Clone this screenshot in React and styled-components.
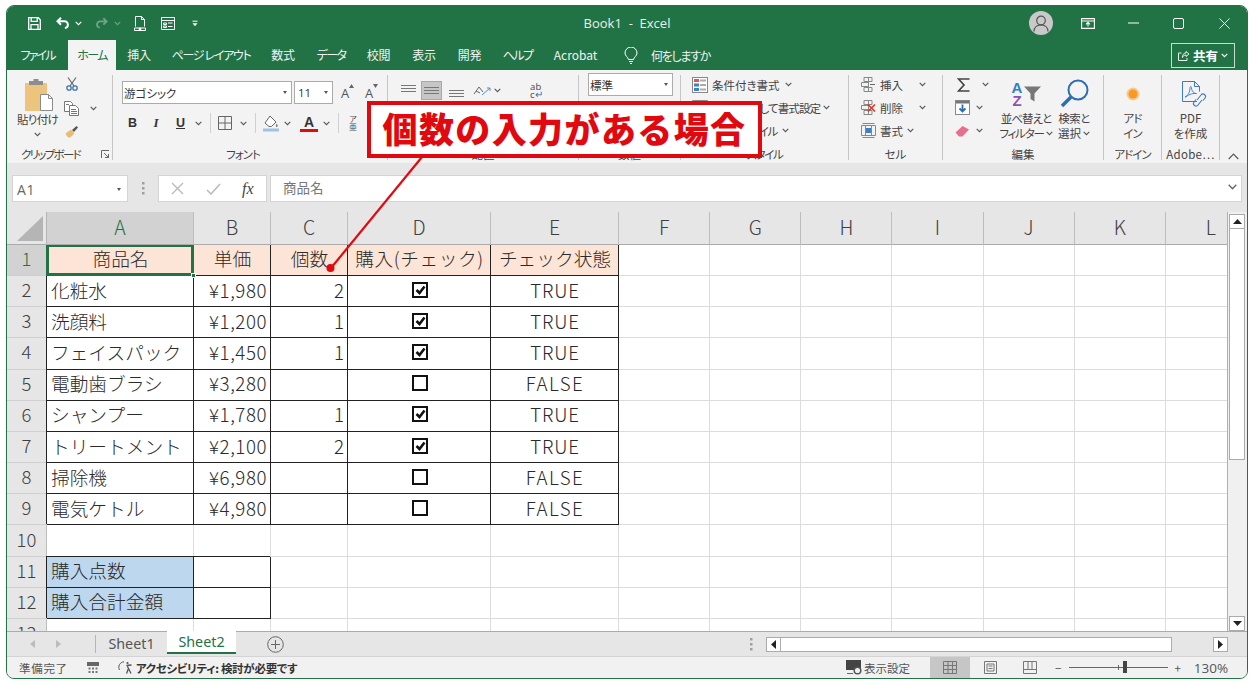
import React from 'react';
import styled, { createGlobalStyle } from 'styled-components';

const JP = `"Noto Sans CJK JP", "Noto Sans", sans-serif`;
const LATIN = `"Open Sans", "Noto Sans CJK JP", sans-serif`;
const GREEN = '#217346';

const Global = createGlobalStyle`
  html, body { margin: 0; padding: 0; background: #fff; }
  body { font-family: ${JP}; width: 1255px; height: 686px; overflow: hidden; }
  * { box-sizing: border-box; }
`;

const Page = styled.div`
  position: relative;
  width: 1255px;
  height: 686px;
  padding: 5px 0 0 6px;
`;
const Win = styled.div`
  width: 1242px;
  height: 674px;
  border: 1px solid ${GREEN};
  border-radius: 8px;
  overflow: hidden;
  display: flex;
  flex-direction: column;
  background: #e6e6e6;
  isolation: isolate;
`;
const Glyph = styled.svg`
  display: block;
  flex-shrink: 0;
  margin-left: ${p => p.$ml || 0}px;
  margin-top: ${p => p.$mt || 0}px;
`;

/* title bar */
const TitleBar = styled.div`
  height: 34px;
  background: ${GREEN};
  display: grid;
  grid-template-columns: 1fr auto 1fr;
  align-items: center;
`;
const Qat = styled.div`
  display: flex;
  align-items: center;
  padding-left: 21px;
`;
const TitleText = styled.div`
  font: 400 13px ${LATIN};
  color: #e9f1ec;
  white-space: pre;
`;
const WinControls = styled.div`
  display: flex;
  justify-content: flex-end;
  align-items: center;
  height: 100%;
`;
const Avatar = styled.div`
  width: 24px;
  height: 24px;
  border-radius: 50%;
  background: #c9c9c9;
  display: flex;
  align-items: center;
  justify-content: center;
  margin-right: 12px;
`;
const WinBtn = styled.div`
  width: 45.5px;
  height: 100%;
  display: flex;
  align-items: center;
  justify-content: center;
`;

/* tab row */
const TabRow = styled.div`
  height: 30px;
  background: ${GREEN};
  display: flex;
  align-items: stretch;
`;
const Tab = styled.div`
  width: ${p => p.$w}px;
  display: flex;
  align-items: center;
  justify-content: center;
  padding-bottom: 1px;
  font: 400 12px ${JP};
  font-feature-settings: "palt";
  letter-spacing: ${p => p.$ls || 0}px;
  color: ${p => (p.$active ? GREEN : '#f0f5f2')};
  background: ${p => (p.$active ? '#f3f3f3' : 'transparent')};
  white-space: pre;
`;
const TellMe = styled.div`
  display: flex;
  align-items: center;
  font: 400 12px ${JP};
  font-feature-settings: "palt";
  color: #f0f5f2;
`;
const TellText = styled.span`
  margin-left: 13px;
  letter-spacing: -1.3px;
`;
const Share = styled.div`
  margin: 3px 12px 2px auto;
  width: 64px;
  border: 1px solid rgba(255, 255, 255, 0.75);
  display: flex;
  align-items: center;
  justify-content: center;
  gap: 3px;
  color: #fff;
  font: 700 12.5px ${JP};
`;

/* ribbon */
const Ribbon = styled.div`
  height: 93px;
  background: #f3f3f3;
  display: flex;
  align-items: flex-start;
  font: 400 11.5px ${JP};
  font-feature-settings: "palt";
  color: #444;
`;
const Group = styled.div`
  width: ${p => p.$w}px;
  height: 85px;
  margin-top: 5px;
  border-right: 1px solid #c6c6c6;
  display: flex;
  flex-direction: column;
  flex-shrink: 0;
`;
const GroupBody = styled.div`
  flex: 1;
  display: flex;
  min-height: 0;
`;
const GroupLabel = styled.div`
  position: relative;
  height: 16px;
  margin-bottom: -2px;
  line-height: 16px;
  text-align: center;
  padding-right: ${p => p.$pr || 0}px;
  letter-spacing: ${p => p.$ls || 0}px;
  white-space: nowrap;
`;
const Launcher = styled.svg`
  position: absolute;
  right: 2px;
  top: 4px;
`;
const PasteCol = styled.div`
  width: 61px;
  display: flex;
  flex-direction: column;
  align-items: center;
  padding-top: 2px;
`;
const PasteIcon = styled.div`
  height: 35px;
  padding-left: 3px;
  display: flex;
  align-items: center;
`;
const BigText = styled.div`
  line-height: 15px;
  min-height: 15px;
  white-space: nowrap;
  display: flex;
  align-items: center;
  gap: 2px;
  letter-spacing: ${p => p.$ls || 0}px;
`;
const BigIconBox = styled.div`
  height: 35px;
  padding-left: ${p => p.$pl || 0}px;
  display: flex;
  align-items: center;
  justify-content: center;
`;
const BigCol = styled.div`
  width: ${p => p.$w}px;
  padding-top: 1px;
  display: flex;
  flex-direction: column;
  align-items: center;
`;
const StackCol = styled.div`
  width: ${p => p.$w}px;
  margin-top: ${p => (p.$mt === undefined ? -2 : p.$mt)}px;
  display: flex;
  flex-direction: column;
`;
const StackRow = styled.div`
  height: 23px;
  padding-left: ${p => p.$pl || 0}px;
  display: flex;
  align-items: center;
  white-space: nowrap;
`;
const RowText = styled.span`
  margin-left: ${p => p.$ml || 0}px;
  letter-spacing: ${p => p.$ls || 0}px;
`;
const FontPanel = styled.div`
  padding: 6px 0 0 9px;
  display: flex;
  flex-direction: column;
  gap: 8px;
`;
const FontRow = styled.div`
  display: flex;
  align-items: center;
  height: ${p => p.$h}px;
`;
const SelectBox = styled.div`
  width: ${p => p.$w}px;
  height: 23px;
  margin-left: ${p => p.$ml || 0}px;
  margin-top: ${p => p.$mt || 0}px;
  background: #fff;
  border: 1px solid #ababab;
  display: flex;
  align-items: center;
  justify-content: space-between;
  padding: 0 4px 0 1px;
  font-size: 11.5px;
  color: #333;
`;
const SizeText = styled.span`
  font: 400 11.5px ${LATIN};
  padding-left: 2px;
`;
const Caret = styled.i`
  display: block;
  border-left: 2.5px solid transparent;
  border-right: 2.5px solid transparent;
  border-top: 3px solid #555;
`;
const GrowA = styled.div`
  width: ${p => p.$w}px;
  margin-left: ${p => p.$ml || 0}px;
  display: flex;
  align-items: flex-start;
  font: 400 13px ${LATIN};
  color: #555;
`;
const CharBtn = styled.div`
  width: ${p => p.$w}px;
  text-align: center;
  color: #333;
  font: ${p => (p.$italic ? 'italic 700 13px "Liberation Serif", serif' : `700 12.5px "Liberation Sans", sans-serif`)};
  text-decoration: ${p => (p.$under ? 'underline' : 'none')};
`;
const ToolSep = styled.div`
  width: 1px;
  height: 20px;
  background: #d0d0d0;
  margin: 0 ${p => p.$r}px 0 ${p => p.$l}px;
`;
const ColorA = styled.div`
  width: 18px;
  margin-left: ${p => p.$ml || 0}px;
  text-align: center;
  font: 700 14px/14px "Liberation Sans", sans-serif;
  color: #333;
  border-bottom: 3px solid #e00b0b;
`;
const Furigana = styled.div`
  margin-left: ${p => p.$ml || 0}px;
  width: 12px;
  font-size: 8px;
  line-height: 8px;
  text-align: center;
  color: #555;
`;
const AlignRow = styled.div`
  margin: 6px 0 0 13px;
  height: 19px;
  display: flex;
  align-items: center;
`;
const AlignOn = styled.div`
  width: 21px;
  height: 19px;
  margin-left: 5px;
  background: #c6c6c6;
  border: 1px solid #a8a8a8;
  display: flex;
  align-items: center;
  justify-content: center;
`;
const WrapIcon = styled.div`
  margin-left: 29px;
  width: 16px;
  font: 400 9.5px/8px ${LATIN};
  color: #444;
  letter-spacing: 0.3px;
`;
const WrapArrow = styled.span`
  color: #2b6fb3;
`;
const SortIcon = styled.div`
  display: flex;
  align-items: center;
  gap: 1px;
`;
const SortLetters = styled.div`
  width: 12px;
  text-align: center;
  font: 700 15px/13px "Liberation Sans", sans-serif;
  color: #2f7fc4;
`;
const SortZ = styled.span`
  display: block;
  color: #8d52b0;
`;
const Collapse = styled.div`
  flex: 1;
  height: 90px;
  display: flex;
  align-items: flex-end;
  justify-content: center;
`;

/* formula */
const FormulaArea = styled.div`
  height: 49px;
  background: #e6e6e6;
  padding: 12px 5px 10px 5px;
  display: flex;
  align-items: stretch;
`;
const NameBox = styled.div`
  width: 116px;
  background: #fff;
  border: 1px solid #d4d4d4;
  display: flex;
  align-items: center;
  justify-content: space-between;
  padding: 2px 6px 0 4px;
  font: 400 14px ${LATIN};
  letter-spacing: 0.6px;
  color: #666;
`;
const Dots = styled.div`
  width: 30px;
  display: flex;
  align-items: center;
  justify-content: center;
`;
const FxBox = styled.div`
  width: 109px;
  background: #fff;
  border: 1px solid #d4d4d4;
  display: flex;
  align-items: center;
  padding-left: 12px;
`;
const FxText = styled.span`
  margin-left: 21px;
  font: italic 400 16px "Liberation Serif", serif;
  color: #444;
`;
const FormulaInput = styled.div`
  flex: 1;
  margin-left: 3px;
  background: #fff;
  border: 1px solid #d4d4d4;
  display: flex;
  align-items: center;
  justify-content: space-between;
  padding: 0 4px 3px 12px;
  font-size: 13.5px;
  color: #777;
`;

/* sheet */
const SheetArea = styled.div`
  height: 419px;
  display: flex;
  background: #e6e6e6;
`;
const GridClip = styled.div`
  width: 1221px;
  height: 100%;
  overflow: hidden;
  border-right: 1px solid #b0b0b0;
  flex-shrink: 0;
`;
const Grid = styled.div`
  display: grid;
  grid-template-columns: 40px 147px 77px 77px 143px 128px repeat(7, 91.15px);
  grid-template-rows: 32.8px repeat(13, 31.2px);
  background: #fff;
  font: 300 18.7px ${JP};
  color: #2a2a2a;
`;
const Corner = styled.div`
  background: #e6e6e6;
  border-right: 1px solid #b5b5b5;
  border-bottom: 1px solid #ababab;
  display: flex;
  align-items: flex-end;
  justify-content: flex-end;
  padding: 0 3px 3px 0;
`;
const ColHead = styled.div`
  background: ${p => (p.$on ? '#d2d2d2' : '#e6e6e6')};
  color: ${p => (p.$on ? GREEN : '#3f3f3f')};
  border-right: 1px solid #bdbdbd;
  border-bottom: 1px solid #ababab;
  display: flex;
  align-items: center;
  justify-content: center;
  padding-bottom: 2px;
  font: 300 19.5px ${JP};
`;
const RowHead = styled.div`
  background: ${p => (p.$on ? '#d2d2d2' : '#e6e6e6')};
  color: ${p => (p.$on ? GREEN : '#3f3f3f')};
  border-right: 1px solid #bdbdbd;
  border-bottom: 1px solid #cfcfcf;
  display: flex;
  align-items: center;
  justify-content: center;
  padding-bottom: 4px;
  font-size: 18.5px;
`;
const Cell = styled.div`
  position: relative;
  display: flex;
  align-items: center;
  justify-content: ${p => ({ left: 'flex-start', center: 'center', right: 'flex-end' }[p.$align || 'left'])};
  padding: 0 3px 4px 4px;
  white-space: nowrap;
  letter-spacing: ${p => p.$ls || 0}px;
  background: ${p => p.$fill || '#fff'};
  border-right: 1px solid ${p => (p.$boxed ? '#222' : '#dcdcdc')};
  border-bottom: 1px solid ${p => (p.$boxed ? '#222' : '#dcdcdc')};
  ${p => p.$boxed && `box-shadow: -1px ${p.$first ? 0 : -1}px 0 #222; z-index: 1;`}
  ${p => p.$selected && `box-shadow: inset 0 0 0 2px ${GREEN}, -1px 0 0 ${GREEN}; border-color: ${GREEN}; z-index: 2;`}
`;
const Handle = styled.i`
  position: absolute;
  right: -3px;
  bottom: -3px;
  width: 5px;
  height: 5px;
  background: ${GREEN};
  border: 1px solid #fff;
`;
const CheckBox = styled.div`
  width: 16px;
  height: 16px;
  margin: 1px 0 0 1px;
  border: 2px solid #111;
  background: #fff;
  display: flex;
  align-items: center;
  justify-content: center;
`;
const VScroll = styled.div`
  flex: 1;
  padding: 2px 3px 0 1px;
  display: flex;
  flex-direction: column;
  background: #f0f0f0;
  height: 100%;
`;
const ArrowBtn = styled.div`
  width: ${p => p.$w}px;
  height: 15px;
  flex-shrink: 0;
  background: #fff;
  border: 1px solid #ababab;
  display: flex;
  align-items: center;
  justify-content: center;
`;
const VTrack = styled.div`
  flex: 1;
  min-height: 0;
`;
const VThumb = styled.div`
  width: 100%;
  height: 231px;
  background: #fff;
  border: 1px solid #ababab;
  border-top: none;
`;

/* tab bar */
const TabBar = styled.div`
  height: 26px;
  background: #e6e6e6;
  border-top: 1px solid #ababab;
  border-bottom: 1px solid #d4d4d4;
  display: flex;
  align-items: stretch;
  font: 400 14px ${LATIN};
  color: #555;
`;
const NavArrows = styled.div`
  width: 89px;
  display: flex;
  align-items: center;
  padding-left: 23px;
  gap: 21px;
  border-right: 1px solid #b5b5b5;
  margin: 3px 0;
`;
const SheetTab = styled.div`
  width: ${p => p.$w}px;
  display: flex;
  align-items: center;
  justify-content: center;
  margin-top: -1px;
  padding-bottom: 1px;
  font-size: 14.3px;
  font-family: "Noto Sans", sans-serif;
  color: ${p => (p.$on ? GREEN : '#555')};
  background: ${p => (p.$on ? '#fff' : 'transparent')};
  border-bottom: ${p => (p.$on ? `2px solid ${GREEN}` : 'none')};
  margin-bottom: ${p => (p.$on ? '2px' : '0')};
`;
const AddSheet = styled.div`
  margin-left: 31px;
  display: flex;
  align-items: center;
`;
const HDots = styled.div`
  margin-left: 466px;
  width: 16px;
  display: flex;
  align-items: center;
`;
const HScroll = styled.div`
  display: flex;
  align-items: center;
`;
const HTrack = styled.div`
  width: 391px;
  height: 15px;
  background: #fff;
  border: 1px solid #ababab;
  border-left: none;
`;
const HGap = styled.div`
  width: 41px;
`;

/* status */
const StatusBar = styled.div`
  flex: 1;
  background: #f1f1f1;
  display: flex;
  align-items: stretch;
  font: 400 11.5px ${JP};
  font-feature-settings: "palt";
  color: #555;
`;
const StatusLeft = styled.div`
  display: flex;
  align-items: center;
  padding-left: 12px;
  width: 839px;
  flex-shrink: 0;
`;
const ReadyText = styled.span`
  letter-spacing: 0.7px;
`;
const AccessText = styled.span`
  margin-left: 4px;
  font-weight: 700;
  letter-spacing: -0.3px;
  color: #333;
`;
const DisplaySet = styled.div`
  width: 84px;
  display: flex;
  align-items: center;
  gap: 2px;
  color: #555;
`;
const ViewBtn = styled.div`
  width: 40px;
  background: ${p => (p.$on ? '#c6c6c6' : 'transparent')};
  display: flex;
  align-items: center;
  justify-content: center;
`;
const ZoomZone = styled.div`
  display: flex;
  align-items: center;
`;
const Slider = styled.div`
  position: relative;
  width: 99px;
  height: 1px;
  background: #666;
  margin-left: 8px;
`;
const SliderTick = styled.i`
  position: absolute;
  left: 49px;
  top: -2px;
  width: 1px;
  height: 5px;
  background: #666;
`;
const SliderThumb = styled.i`
  position: absolute;
  left: 54px;
  top: -6px;
  width: 4px;
  height: 12px;
  background: #444;
`;
const ZoomPct = styled.span`
  margin-left: 13px;
  font: 400 13.5px ${LATIN};
  color: #555;
`;

/* callout */
const CalloutBox = styled.div`
  position: absolute;
  left: 367px;
  top: 101px;
  width: 395px;
  height: 57px;
  border: 4px solid #e2080f;
  background: #fff;
  display: flex;
  align-items: center;
  justify-content: center;
  padding-bottom: 4px;
  font: 900 35px ${JP};
  letter-spacing: 1.4px;
  color: #e2080f;
  white-space: nowrap;
`;
const Leader = styled.svg`
  position: absolute;
  left: 320px;
  top: 150px;
  pointer-events: none;
`;

const Chev = ({ ml, c = '#555' }) => (
  <Glyph $ml={ml} width="7" height="5" viewBox="0 0 7 5">
    <path d="M.7.8 3.5 3.7 6.3.8" stroke={c} strokeWidth="1.1" fill="none" />
  </Glyph>
);

const I = {
  Save: () => (
    <Glyph width="13" height="13" viewBox="0 0 13 13" fill="none" stroke="#fff" strokeWidth="1.3">
      <path d="M.7.7h9.6l2 2v9.6H.7zM3.2.8v3.6h6V.8M3 12.2V7.6h7v4.6" />
    </Glyph>
  ),
  Undo: ({ ml }) => (
    <Glyph $ml={ml} width="14" height="12" viewBox="0 0 14 12" fill="none" stroke="#fff" strokeWidth="2">
      <path d="M5 .8 1.5 4.3 5 7.8M2 4.3h6.5a3.4 3.4 0 0 1 3.4 3.4v0a3.4 3.4 0 0 1-3 3.3" />
    </Glyph>
  ),
  Redo: ({ ml }) => (
    <Glyph $ml={ml} width="13" height="12" viewBox="0 0 14 12" fill="none" stroke="#6fa286" strokeWidth="2">
      <path d="M9 .8l3.5 3.5L9 7.8M12 4.3H5.5a3.4 3.4 0 0 0-3.4 3.4v0a3.4 3.4 0 0 0 3 3.3" />
    </Glyph>
  ),
  Preview: ({ ml }) => (
    <Glyph $ml={ml} width="12" height="15" viewBox="0 0 12 15" fill="none" stroke="#fff" strokeWidth="1">
      <path d="M1.5.5h6l3 3v7M7.5.5v3h3M1.5.5v10M.5 12h11v2.5H.5z" />
      <circle cx="6" cy="13" r="1" fill="#fff" />
    </Glyph>
  ),
  Form: ({ ml }) => (
    <Glyph $ml={ml} width="14" height="13" viewBox="0 0 14 13" fill="none" stroke="#fff" strokeWidth="1">
      <path d="M.5.5h13v12H.5zM.5 3.5h13M2.5 6h3v1.5h-3zM7 6h4.5M2.5 9h3v1.5h-3zM7 9.5h4.5" />
    </Glyph>
  ),
  Custom: ({ ml }) => (
    <Glyph $ml={ml} width="6" height="7" viewBox="0 0 6 7">
      <path d="M.5 1.2h5" stroke="#fff" />
      <path d="M.5 3.2h5L3 6.2z" fill="#fff" />
    </Glyph>
  ),
  Person: () => (
    <svg width="16" height="17" viewBox="0 0 16 17" fill="none" stroke="#555" strokeWidth="1.2">
      <circle cx="8" cy="5.5" r="4.3" />
      <path d="M1 16.5c0-4 3-6.6 7-6.6s7 2.6 7 6.6" />
    </svg>
  ),
  Display: () => (
    <svg width="14" height="11" viewBox="0 0 14 11" fill="none" stroke="#fff" strokeWidth="1.1">
      <path d="M.6.6h12.8v9.8H.6zM.6 3h12.8" />
      <path d="M7 8.5v-4M5 6.3l2-2 2 2" />
    </svg>
  ),
  Min: () => <svg width="11" height="2" viewBox="0 0 11 2"><path d="M0 1h11" stroke="#fff" /></svg>,
  Max: () => (
    <svg width="11" height="11" viewBox="0 0 11 11"><rect x=".5" y=".5" width="10" height="10" rx="1.5" fill="none" stroke="#fff" /></svg>
  ),
  Close: () => (
    <svg width="11" height="11" viewBox="0 0 11 11"><path d="M.5.5l10 10M10.5.5l-10 10" stroke="#fff" /></svg>
  ),
  Bulb: () => (
    <Glyph $ml={16} width="14" height="17" viewBox="0 0 14 17" fill="none" stroke="#fff" strokeWidth="1">
      <path d="M4.5 12.5C4 10 1 9 1 6a6 6 0 0 1 12 0c0 3-3 4-3.5 6.5zM5 14.5h4M6 16.5h2" />
    </Glyph>
  ),
  ShareI: () => (
    <svg width="12" height="11" viewBox="0 0 12 11" fill="none" stroke="#fff" strokeWidth=".9">
      <path d="M8 1.5 11 4 8 6.5V5C6 5 5 6 4.5 7.5 4.5 5 5.5 3 8 3zM3.5 3h-3v7.5H9V8" />
    </svg>
  ),
  Paste: () => (
    <Glyph width="30" height="33" viewBox="0 0 30 33">
      <rect x="1" y="5" width="22" height="28" fill="#edc47d" />
      <path d="M5 7V3h4.5V1h5v2H19v4z" fill="#8d8d8d" />
      <path d="M16.5 16.5h8l4 4v12h-12z" fill="#fff" stroke="#8a8a8a" />
      <path d="M24.5 16.5v4h4" fill="none" stroke="#8a8a8a" />
    </Glyph>
  ),
  Cut: ({ ml, mt }) => (
    <Glyph $ml={ml} $mt={mt} width="12" height="14" viewBox="0 0 12 14" fill="none">
      <path d="M2 .5l6 8.5M10 .5 4 9" stroke="#666" strokeWidth="1.2" />
      <circle cx="3" cy="11" r="2.2" stroke="#3f74a8" strokeWidth="1.3" />
      <circle cx="9" cy="11" r="2.2" stroke="#3f74a8" strokeWidth="1.3" />
    </Glyph>
  ),
  Copy: ({ ml }) => (
    <Glyph $ml={ml} width="15" height="15" viewBox="0 0 15 15" fill="#fff" stroke="#777" strokeWidth="1">
      <path d="M.5.5h6l2 2v8h-8z" />
      <path d="M5.5 4.5h6l3 3v7h-9z" />
      <path d="M7 8.5h5M7 10.5h6M7 12.5h6M2 3.5h3" />
    </Glyph>
  ),
  Brush: ({ ml }) => (
    <Glyph $ml={ml} width="14" height="13" viewBox="0 0 14 13">
      <path d="M.5 8.5 6 4.5l3.5 4L5 12.5C3 13 1.5 11 .5 8.5z" fill="#e8bc72" />
      <path d="M7 5l4.500-4 1.500 1.500L9 7z" fill="#555" />
    </Glyph>
  ),
  Launch: () => (
    <Launcher width="9" height="9" viewBox="0 0 9 9" fill="none" stroke="#666">
      <path d="M.5 8V.5H8M3 3l4.500 4.500M7.500 4v3.500H4" />
    </Launcher>
  ),
  Borders: ({ ml }) => (
    <Glyph $ml={ml} width="14" height="14" viewBox="0 0 14 14" fill="none" stroke="#666">
      <path d="M.5.5h13v13H.5zM7 .5v13M.5 7h13" />
    </Glyph>
  ),
  Fill: ({ ml }) => (
    <Glyph $ml={ml} width="16" height="17" viewBox="0 0 16 17">
      <path d="M7 1 13 7l-4.500 4.500H6L2 8z" fill="#fff" stroke="#666" />
      <path d="M13.5 8.5c1 1.500 1.500 2 1 3-.8 1-2 0-1.600-1z" fill="#777" />
      <rect y="13.5" width="16" height="3" fill="#9dc3e6" />
    </Glyph>
  ),
  Lines: ({ ml, ys, w = 15 }) => (
    <Glyph $ml={ml} width={w} height="13" viewBox={`0 0 ${w} 13`}>
      {ys.map(y => (
        <path key={y} d={`M0 ${y}.5h${w}`} stroke="#777" />
      ))}
    </Glyph>
  ),
  Orient: ({ ml }) => (
    <Glyph $ml={ml} width="20" height="14" viewBox="0 0 20 14" fill="none" stroke="#666">
      <path d="M2 10 7 3l4 5M4 7l4 2" />
      <path d="M10 11 18 4M15 4h3v3" stroke="#5a8fc4" />
    </Glyph>
  ),
  CondFmt: () => (
    <Glyph width="16" height="16" viewBox="0 0 16 16">
      <rect x=".5" y=".5" width="15" height="15" fill="#fff" stroke="#888" />
      <rect x="2" y="2" width="5" height="3" fill="#e05a4a" />
      <rect x="2" y="6.5" width="5" height="3" fill="#3f7fc4" />
      <rect x="2" y="11" width="5" height="3" fill="#3f7fc4" />
      <path d="M8 3.500h6M8 8h6M8 12.500h6" stroke="#aaa" strokeWidth="2" />
    </Glyph>
  ),
  TableFmt: () => (
    <Glyph width="16" height="15" viewBox="0 0 16 15" fill="none" stroke="#888">
      <path d="M.5.5h15v14H.5zM.5 5h15M.5 10h15M8 .5v14" />
    </Glyph>
  ),
  CellIns: ({ x }) => (
    <Glyph $ml={12} width="15" height="15" viewBox="0 0 15 15" fill="none" stroke="#888">
      <path d="M3 .5h8v4H3zM.5 5.500h7v4h-7zM3 10.500h8v4H3zM7.500 .5v14" />
      {x && <path d="M7 4.500l7 7M14 4.500l-7 7" stroke="#d8362a" strokeWidth="1.7" />}
      {!x && <path d="M9 7.500h5" stroke="#666" />}
    </Glyph>
  ),
  CellFmt: () => (
    <Glyph $ml={12} width="15" height="15" viewBox="0 0 15 15" fill="none" stroke="#888">
      <path d="M1.500.5h12M1.500 14.500h12M.5 2.500h14v10H.5zM4.500 2.500v10M10.500 2.500v10" />
      <rect x="5" y="5" width="5" height="5" fill="#3f7fc4" stroke="none" />
    </Glyph>
  ),
  Sigma: () => (
    <Glyph $ml={14} width="13" height="14" viewBox="0 0 13 14" fill="none" stroke="#444" strokeWidth="1.7">
      <path d="M12.500 1H1.500l5.500 6-5.500 6h11" />
    </Glyph>
  ),
  FillDown: () => (
    <Glyph $ml={12} width="15" height="15" viewBox="0 0 15 15">
      <rect x=".5" y=".5" width="14" height="14" fill="#fff" stroke="#888" />
      <rect x="1" y="1" width="13" height="2.5" fill="#777" />
      <path d="M7.500 4.500v7M4.500 8.500l3 3 3-3" stroke="#2b6fb3" strokeWidth="1.8" fill="none" />
    </Glyph>
  ),
  Eraser: () => (
    <Glyph $ml={12} width="15" height="12" viewBox="0 0 15 12">
      <path d="M.5 7.500 7.500 1 14 4.500 7.500 11.500H4z" fill="#e66f8c" />
    </Glyph>
  ),
  Funnel: () => (
    <svg width="17" height="16" viewBox="0 0 17 16"><path d="M0 .5h17l-6.500 7v8l-4-2.500V7.500z" fill="#777" /></svg>
  ),
  Magnifier: () => (
    <svg width="29" height="29" viewBox="0 0 29 29" fill="none">
      <circle cx="18" cy="11" r="9.5" stroke="#2b6fb3" strokeWidth="2" />
      <path d="M11 18 2 27" stroke="#2b6fb3" strokeWidth="3.5" />
    </svg>
  ),
  Dot: () => (
    <svg width="14" height="14" viewBox="0 0 14 14">
      <circle cx="7" cy="7" r="6.5" fill="#f9c88f" />
      <circle cx="7" cy="7" r="4.5" fill="#f59a23" />
    </svg>
  ),
  Pdf: () => (
    <svg width="28" height="28" viewBox="0 0 28 28" fill="none" stroke="#3f79c2" strokeWidth="1">
      <path d="M17 21.500H2.500V1.500h12l5 5v5M14.500 1.500v5h5" />
      <path d="M5 17c3-1 5-5 5-9 0-2 1.500-2 1.500 0 0 3 3 6 5 5.500-3-.5-7 .5-11 3.500z" strokeWidth=".9" />
      <path d="M17 20l4-5a2.500 2.500 0 0 1 4 3l-2 2.500M22 20l-4 5a2.500 2.500 0 0 1-4-3l2-2.500" strokeWidth="1.1" />
    </svg>
  ),
  Up: () => (
    <svg width="11" height="7" viewBox="0 0 11 7"><path d="M.7 6 5.500 1l4.800 5" fill="none" stroke="#555" strokeWidth="1.1" /></svg>
  ),
  DownThin: () => (
    <svg width="9" height="6" viewBox="0 0 9 6"><path d="M.7.8 4.500 4.800 8.300.8" fill="none" stroke="#666" strokeWidth="1.3" /></svg>
  ),
  DotsV: () => (
    <svg width="3" height="13" viewBox="0 0 3 13" fill="#a0a0a0"><rect width="2.5" height="2.5" /><rect y="5" width="2.5" height="2.5" /><rect y="10" width="2.5" height="2.5" /></svg>
  ),
  X: () => (
    <Glyph width="13" height="13" viewBox="0 0 13 13"><path d="M1 1l11 11M12 1 1 12" stroke="#b9b9b9" strokeWidth="1.3" /></Glyph>
  ),
  Tick: () => (
    <Glyph $ml={22} width="15" height="12" viewBox="0 0 15 12"><path d="M1 7l4 4L14 1" fill="none" stroke="#b9b9b9" strokeWidth="1.5" /></Glyph>
  ),
  Corner: () => (
    <svg width="26" height="25" viewBox="0 0 26 25"><path d="M26 0v25H0z" fill="#b5b5b5" /></svg>
  ),
  Check: () => (
    <svg width="11" height="10" viewBox="0 0 11 10"><path d="M1.500 5 4.500 8 9.500 1.500" fill="none" stroke="#111" strokeWidth="2.6" /></svg>
  ),
  TriUp: () => <svg width="9" height="5" viewBox="0 0 9 5"><path d="M4.500 0 9 5H0z" fill="#222" /></svg>,
  TriDown: () => <svg width="9" height="5" viewBox="0 0 9 5"><path d="M4.500 5 9 0H0z" fill="#222" /></svg>,
  TriLeft: () => <svg width="5" height="9" viewBox="0 0 5 9"><path d="M0 4.500 5 0v9z" fill="#222" /></svg>,
  TriRight: () => <svg width="5" height="9" viewBox="0 0 5 9"><path d="M5 4.500 0 0v9z" fill="#222" /></svg>,
  NavL: () => <svg width="5" height="8" viewBox="0 0 5 8"><path d="M0 4 5 0v8z" fill="#bcbcbc" /></svg>,
  NavR: () => <svg width="5" height="8" viewBox="0 0 5 8"><path d="M5 4 0 0v8z" fill="#bcbcbc" /></svg>,
  Add: () => (
    <svg width="17" height="17" viewBox="0 0 17 17" fill="none" stroke="#666"><circle cx="8.5" cy="8.5" r="7.8" /><path d="M8.500 4v9M4 8.500h9" /></svg>
  ),
  Macro: () => (
    <Glyph $ml={19} width="12" height="12" viewBox="0 0 12 12">
      <rect x="0" y="0" width="12" height="4" fill="#666" />
      <path d="M1.500 5.500h2v2h-2zM5 5.500h2v2H5zM8.500 5.500h2v2h-2zM1.500 9h2v2h-2zM5 9h2v2H5zM8.500 9h2v2h-2z" fill="#777" />
    </Glyph>
  ),
  Access: () => (
    <Glyph $ml={19} width="14" height="14" viewBox="0 0 14 14" fill="none" stroke="#555">
      <path d="M6 .8A5.500 5.500 0 0 0 1.500 9" />
      <path d="M8.500 4.500 13.500 4M9 4.500l1.500 3-2 5M10.500 7.500l2.500 5" strokeWidth="1.3" />
      <circle cx="9.5" cy="2" r="1.1" fill="#555" stroke="none" />
    </Glyph>
  ),
  DispSet: () => (
    <Glyph width="16" height="15" viewBox="0 0 16 15">
      <rect width="15" height="10" fill="#444" />
      <path d="M1 13.500h6" stroke="#666" />
      <circle cx="11.5" cy="10.5" r="3.3" fill="#f1f1f1" stroke="#555" strokeWidth="1.5" />
    </Glyph>
  ),
  ViewGrid: () => (
    <svg width="14" height="13" viewBox="0 0 14 13" fill="none" stroke="#777"><path d="M.5.5h13v12H.5zM5 .5v12M9.500 .5v12M.5 4.500h13M.5 8.500h13" /></svg>
  ),
  ViewPage: () => (
    <svg width="13" height="13" viewBox="0 0 13 13" fill="none" stroke="#777"><path d="M.5.5h12v12H.5zM3 3h7v7H3zM4.500 5h4M4.500 7.500h4" /></svg>
  ),
  ViewBreak: () => (
    <svg width="14" height="13" viewBox="0 0 14 13" fill="none" stroke="#777"><path d="M.5.5h13v12H.5zM.5 8.500h13M5 .5v8M9 .5v8" /></svg>
  ),
};

const tabs = [
  ['ファイル', 61, -1.8], ['ホーム', 48, -1.6, true], ['挿入', 46, -0.3], ['ページ レイアウト', 98, -1.3], ['数式', 46, -0.3],
  ['データ', 50, -1.6], ['校閲', 45, -0.3], ['表示', 46, -0.3], ['開発', 45, -0.3], ['ヘルプ', 51, -1.6], ['Acrobat', 65, 0],
];
const columns = 'ABCDEFGHIJKL'.split('');
const data = [
  ['化粧水', '¥1,980', '2', true, 'TRUE'],
  ['洗顔料', '¥1,200', '1', true, 'TRUE'],
  ['フェイスパック', '¥1,450', '1', true, 'TRUE'],
  ['電動歯ブラシ', '¥3,280', '', false, 'FALSE'],
  ['シャンプー', '¥1,780', '1', true, 'TRUE'],
  ['トリートメント', '¥2,100', '2', true, 'TRUE'],
  ['掃除機', '¥6,980', '', false, 'FALSE'],
  ['電気ケトル', '¥4,980', '', false, 'FALSE'],
];
const headers = ['商品名', '単価', '個数', '購入(チェック)', 'チェック状態'];
const PEACH = '#fce4d6';
const BLUE = '#bdd7ee';

const Blanks = ({ row, from }) =>
  columns.slice(from).map(c => <Cell key={`${row}${c}`} />);

function SheetGrid() {
  return (
    <Grid>
      <Corner><I.Corner /></Corner>
      {columns.map((c, i) => <ColHead key={c} $on={i === 0}>{c}</ColHead>)}
      <RowHead $on>1</RowHead>
      {headers.map((h, i) => (
        <Cell key={h} $fill={PEACH} $boxed $first $align="center" $selected={i === 0} $ls={i === 3 ? 0.6 : 0}>
          {h}
          {i === 0 && <Handle />}
        </Cell>
      ))}
      <Blanks row={1} from={5} />
      {data.map((r, i) => (
        <React.Fragment key={r[0]}>
          <RowHead>{i + 2}</RowHead>
          <Cell $boxed>{r[0]}</Cell>
          <Cell $boxed $align="right" $ls={0.55}>{r[1]}</Cell>
          <Cell $boxed $align="right">{r[2]}</Cell>
          <Cell $boxed $align="center">
            <CheckBox>{r[3] && <I.Check />}</CheckBox>
          </Cell>
          <Cell $boxed $align="center" $ls={r[4] === 'TRUE' ? 0.8 : 1.5}>{r[4]}</Cell>
          <Blanks row={i + 2} from={5} />
        </React.Fragment>
      ))}
      <RowHead>10</RowHead>
      <Blanks row={10} from={0} />
      <RowHead>11</RowHead>
      <Cell $boxed $fill={BLUE}>購入点数</Cell>
      <Cell $boxed />
      <Blanks row={11} from={2} />
      <RowHead>12</RowHead>
      <Cell $boxed $fill={BLUE}>購入合計金額</Cell>
      <Cell $boxed />
      <Blanks row={12} from={2} />
      <RowHead>13</RowHead>
      <Blanks row={13} from={0} />
    </Grid>
  );
}

function RibbonBar() {
  return (
    <Ribbon>
      <Group $w={106}>
        <GroupBody>
          <PasteCol>
            <PasteIcon><I.Paste /></PasteIcon>
            <BigText $ls={-0.7}>貼り付け</BigText>
            <BigText><Chev /></BigText>
          </PasteCol>
          <StackCol $w={44} $mt={-1}>
            <StackRow><I.Cut ml={-2} mt={-4} /></StackRow>
            <StackRow><I.Copy ml={-4} /><Chev ml={11} /></StackRow>
            <StackRow><I.Brush ml={-3} /></StackRow>
          </StackCol>
        </GroupBody>
        <GroupLabel $pr={18} $ls={-1.7}>クリップボード<I.Launch /></GroupLabel>
      </Group>

      <Group $w={275}>
        <GroupBody>
          <FontPanel>
            <FontRow $h={23}>
              <SelectBox $w={170}>游ゴシック<Caret /></SelectBox>
              <SelectBox $w={39} $ml={2}><SizeText>11</SizeText><Caret /></SelectBox>
              <GrowA $w={14} $ml={8}>A<Glyph width="5" height="4" viewBox="0 0 5 4"><path d="M2.500 0 5 4H0z" fill="#666" /></Glyph></GrowA>
              <GrowA $w={14} $ml={10}>A<Glyph width="5" height="4" viewBox="0 0 5 4"><path d="M2.500 4 5 0H0z" fill="#666" /></Glyph></GrowA>
            </FontRow>
            <FontRow $h={22}>
              <CharBtn $w={21}>B</CharBtn>
              <CharBtn $w={26} $italic>I</CharBtn>
              <CharBtn $w={23} $under>U</CharBtn>
              <Chev ml={3} />
              <ToolSep $l={8} $r={7} />
              <I.Borders />
              <Chev ml={8} />
              <ToolSep $l={8} $r={7} />
              <I.Fill />
              <Chev ml={5} />
              <ColorA $ml={9}>A</ColorA>
              <Chev ml={5} />
              <ToolSep $l={8} $r={8} />
              <Furigana>ア<br />亜</Furigana>
            </FontRow>
          </FontPanel>
        </GroupBody>
        <GroupLabel $pr={14} $ls={-1}>フォント</GroupLabel>
      </Group>

      <Group $w={191}>
        <GroupBody>
          <AlignRow>
            <I.Lines ys={[1, 4, 7]} />
            <AlignOn><I.Lines ys={[3, 6, 9]} /></AlignOn>
            <I.Lines ml={7} ys={[6, 9, 12]} />
            <I.Orient ml={8} />
            <Chev ml={2} />
            <WrapIcon>ab<br />c<WrapArrow>↵</WrapArrow></WrapIcon>
          </AlignRow>
        </GroupBody>
        <GroupLabel>配置</GroupLabel>
      </Group>

      <Group $w={102}>
        <GroupBody>
          <SelectBox $w={85} $ml={9} $mt={-2}>標準<Caret /></SelectBox>
        </GroupBody>
        <GroupLabel>数値</GroupLabel>
      </Group>

      <Group $w={168}>
        <GroupBody>
          <StackCol $w={167}>
            <StackRow $pl={11}><I.CondFmt /><RowText $ml={4}>条件付き書式</RowText><Chev ml={5} /></StackRow>
            <StackRow $pl={11}><I.TableFmt /><RowText $ml={4} $ls={-0.9}>テーブルとして書式設定</RowText><Chev ml={3} /></StackRow>
            <StackRow $pl={11}><I.TableFmt /><RowText $ml={4} $ls={-1.3}>セルのスタイル</RowText><Chev ml={5} /></StackRow>
          </StackCol>
        </GroupBody>
        <GroupLabel $ls={-1.4}>スタイル</GroupLabel>
      </Group>

      <Group $w={94}>
        <GroupBody>
          <StackCol $w={93}>
            <StackRow><I.CellIns /><RowText $ml={4}>挿入</RowText><Chev ml={16} /></StackRow>
            <StackRow><I.CellIns x /><RowText $ml={4}>削除</RowText><Chev ml={16} /></StackRow>
            <StackRow><I.CellFmt /><RowText $ml={4}>書式</RowText><Chev ml={4} /></StackRow>
          </StackCol>
        </GroupBody>
        <GroupLabel>セル</GroupLabel>
      </Group>

      <Group $w={161}>
        <GroupBody>
          <StackCol $w={58}>
            <StackRow><I.Sigma /><Chev ml={12} /></StackRow>
            <StackRow><I.FillDown /><Chev ml={6} /></StackRow>
            <StackRow><I.Eraser /><Chev ml={6} /></StackRow>
          </StackCol>
          <BigCol $w={50}>
            <BigIconBox>
              <SortIcon>
                <SortLetters>A<SortZ>Z</SortZ></SortLetters>
                <I.Funnel />
              </SortIcon>
            </BigIconBox>
            <BigText $ls={-1}>並べ替えと</BigText>
            <BigText $ls={-1.2}>フィルター<Chev /></BigText>
          </BigCol>
          <BigCol $w={46}>
            <BigIconBox><I.Magnifier /></BigIconBox>
            <BigText $ls={-0.5}>検索と</BigText>
            <BigText>選択<Chev /></BigText>
          </BigCol>
        </GroupBody>
        <GroupLabel>編集</GroupLabel>
      </Group>

      <Group $w={58}>
        <GroupBody>
          <BigCol $w={57}>
            <BigIconBox><I.Dot /></BigIconBox>
            <BigText $ls={-0.8}>アド</BigText>
            <BigText $ls={-0.8}>イン</BigText>
          </BigCol>
        </GroupBody>
        <GroupLabel $ls={-1}>アドイン</GroupLabel>
      </Group>

      <Group $w={58}>
        <GroupBody>
          <BigCol $w={57}>
            <BigIconBox $pl={6}><I.Pdf /></BigIconBox>
            <BigText>PDF</BigText>
            <BigText>を作成</BigText>
          </BigCol>
        </GroupBody>
        <GroupLabel $ls={0.3}>Adobe…</GroupLabel>
      </Group>

      <Collapse><I.Up /></Collapse>
    </Ribbon>
  );
}

export default function App() {
  return (
    <Page>
      <Global />
      <Win>
        <TitleBar>
          <Qat>
            <I.Save />
            <I.Undo ml={15} />
            <Chev ml={5} c="#fff" />
            <I.Redo ml={13} />
            <Chev ml={6} c="#6fa286" />
            <I.Preview ml={13} />
            <I.Form ml={15} />
            <I.Custom ml={17} />
          </Qat>
          <TitleText>Book1  -  Excel</TitleText>
          <WinControls>
            <Avatar><I.Person /></Avatar>
            <WinBtn><I.Display /></WinBtn>
            <WinBtn><I.Min /></WinBtn>
            <WinBtn><I.Max /></WinBtn>
            <WinBtn><I.Close /></WinBtn>
          </WinControls>
        </TitleBar>
        <TabRow>
          {tabs.map(([t, w, ls, on]) => <Tab key={t} $w={w} $ls={ls} $active={on}>{t}</Tab>)}
          <TellMe><I.Bulb /><TellText>何をしますか</TellText></TellMe>
          <Share><I.ShareI />共有<Chev c="#fff" /></Share>
        </TabRow>
        <RibbonBar />
        <FormulaArea>
          <NameBox>A1<Caret /></NameBox>
          <Dots><I.DotsV /></Dots>
          <FxBox><I.X /><I.Tick /><FxText>fx</FxText></FxBox>
          <FormulaInput>商品名<I.DownThin /></FormulaInput>
        </FormulaArea>
        <SheetArea>
          <GridClip><SheetGrid /></GridClip>
          <VScroll>
            <ArrowBtn $w={16}><I.TriUp /></ArrowBtn>
            <VTrack><VThumb /></VTrack>
            <ArrowBtn $w={16}><I.TriDown /></ArrowBtn>
          </VScroll>
        </SheetArea>
        <TabBar>
          <NavArrows><I.NavL /><I.NavR /></NavArrows>
          <SheetTab $w={71}>Sheet1</SheetTab>
          <SheetTab $w={69} $on>Sheet2</SheetTab>
          <AddSheet><I.Add /></AddSheet>
          <HDots><I.DotsV /></HDots>
          <HScroll>
            <ArrowBtn $w={15}><I.TriLeft /></ArrowBtn>
            <HTrack />
            <HGap />
            <ArrowBtn $w={15}><I.TriRight /></ArrowBtn>
          </HScroll>
        </TabBar>
        <StatusBar>
          <StatusLeft>
            <ReadyText>準備完了</ReadyText>
            <I.Macro />
            <I.Access />
            <AccessText>アクセシビリティ: 検討が必要です</AccessText>
          </StatusLeft>
          <DisplaySet><I.DispSet />表示設定</DisplaySet>
          <ViewBtn $on><I.ViewGrid /></ViewBtn>
          <ViewBtn><I.ViewPage /></ViewBtn>
          <ViewBtn><I.ViewBreak /></ViewBtn>
          <ZoomZone>
            <RowText $ml={5}>−</RowText>
            <Slider><SliderTick /><SliderThumb /></Slider>
            <RowText $ml={6}>+</RowText>
            <ZoomPct>130%</ZoomPct>
          </ZoomZone>
        </StatusBar>
      </Win>
      <CalloutBox>個数の入力がある場合</CalloutBox>
      <Leader width="110" height="125" viewBox="0 0 110 125">
        <path d="M102 7 11 118" stroke="#e2080f" strokeWidth="2.2" />
        <circle cx="10.5" cy="118" r="4" fill="#e2080f" />
      </Leader>
    </Page>
  );
}
